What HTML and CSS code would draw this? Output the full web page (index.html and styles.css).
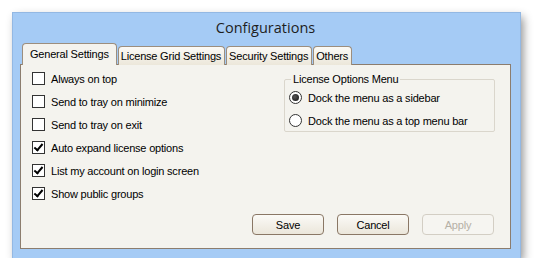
FILE: index.html
```html
<!DOCTYPE html>
<html lang="en">
<head>
    <meta charset="UTF-8">
    <title>Configurations</title>
    <link rel="stylesheet" href="styles.css">
</head>
<body>
    <div class="window">
        <div class="title">Configurations</div>
        <div class="tabs">
            <div class="tab active">General Settings</div>
            <div class="tab">License Grid Settings</div>
            <div class="tab">Security Settings</div>
            <div class="tab">Others</div>
        </div>
        <div class="panel">
            <div class="columns">
                <div class="options">
                    <label class="check"><span class="box"></span>Always on top</label>
                    <label class="check"><span class="box"></span>Send to tray on minimize</label>
                    <label class="check"><span class="box"></span>Send to tray on exit</label>
                    <label class="check"><span class="box on"></span>Auto expand license options</label>
                    <label class="check"><span class="box on"></span>List my account on login screen</label>
                    <label class="check"><span class="box on"></span>Show public groups</label>
                </div>
                <fieldset class="group">
                    <legend>License Options Menu</legend>
                    <label class="radio"><span class="dot on"></span>Dock the menu as a sidebar</label>
                    <label class="radio"><span class="dot"></span>Dock the menu as a top menu bar</label>
                </fieldset>
            </div>
            <div class="buttons">
                <button>Save</button>
                <button>Cancel</button>
                <button class="disabled">Apply</button>
            </div>
        </div>
    </div>
</body>
</html>
```

FILE: styles.css
```css
body {
    margin: 0;
    background-color: #ffffff;
    font-family: "Liberation Sans", Arial, sans-serif;
    font-size: 11px;
    letter-spacing: -0.2px;
    color: #000000;
}
.window {
    margin: 13px 0 0 13px;
    width: 491px;
    height: 236px;
    padding: 0 9px 9px 7px;
    background-color: #a5cbf5;
    box-sizing: content-box;
    box-shadow: 0 0 0 1px #93b8e3, 3px 4px 9px rgba(0, 0, 0, 0.45);
    display: flex;
    flex-direction: column;
}
.title {
    height: 29px;
    line-height: 29px;
    text-align: center;
    font-family: "Open Sans", sans-serif;
    font-size: 14.5px;
    letter-spacing: 0;
    color: #1e1e1e;
}
.tabs {
    display: flex;
    align-items: flex-end;
    height: 22px;
    padding-left: 2px;
    gap: 1px;
}
.tab {
    height: 18px;
    line-height: 18px;
    padding: 0 3px 0 2px;
    border: 1px solid #9c8e7e;
    border-bottom: none;
    border-radius: 4px 4px 0 0;
    background: linear-gradient(#fbfaf6, #ece7da);
    margin-bottom: -1px;
    position: relative;
}
.tab.active {
    height: 21px;
    line-height: 21px;
    padding: 0 7px 0 7px;
    background: #f4f3ee;
    z-index: 1;
}
.panel {
    flex: 1;
    background-color: #f4f3ee;
    border: 1px solid #8c7d6e;
    display: flex;
    flex-direction: column;
}
.columns {
    display: flex;
    flex: 1;
}
.options {
    width: 252px;
    padding: 2px 0 0 11px;
    display: flex;
    flex-direction: column;
}
.check, .radio {
    height: 23px;
    display: flex;
    align-items: center;
}
.box {
    width: 11px;
    height: 11px;
    border: 1px solid #333333;
    background-color: #ffffff;
    margin-right: 6px;
    position: relative;
}
.box.on::after {
    content: "";
    position: absolute;
    left: 3px;
    top: 0px;
    width: 3px;
    height: 7px;
    border: solid #000000;
    border-width: 0 2px 2px 0;
    transform: rotate(40deg);
}
.group {
    margin: 8px 0 0 0;
    padding: 1px 0 0 4px;
    width: 205px;
    height: 56px;
    border: 1px solid #dad6cc;
    border-radius: 2px;
}
.group legend {
    padding: 0 2px;
    margin-left: 2px;
}
.dot {
    width: 11px;
    height: 11px;
    border: 1px solid #333333;
    border-radius: 50%;
    background-color: #ffffff;
    margin-right: 6px;
    position: relative;
}
.dot.on::after {
    content: "";
    position: absolute;
    left: 2px;
    top: 2px;
    width: 7px;
    height: 7px;
    border-radius: 50%;
    background: radial-gradient(circle at 40% 40%, #555555, #111111);
}
.buttons {
    display: flex;
    justify-content: flex-end;
    gap: 13px;
    padding: 0 16px 13px 0;
}
button {
    width: 72px;
    height: 21px;
    font-family: "Liberation Sans", Arial, sans-serif;
    font-size: 11px;
    letter-spacing: -0.2px;
    color: #000000;
    background: linear-gradient(#fbfaf7, #ebe6da);
    border: 1px solid #8a7765;
    border-radius: 4px;
    padding: 0;
}
button.disabled {
    color: #b5b0a6;
    border-color: #d3cec4;
    background: #f6f5f1;
}
```
